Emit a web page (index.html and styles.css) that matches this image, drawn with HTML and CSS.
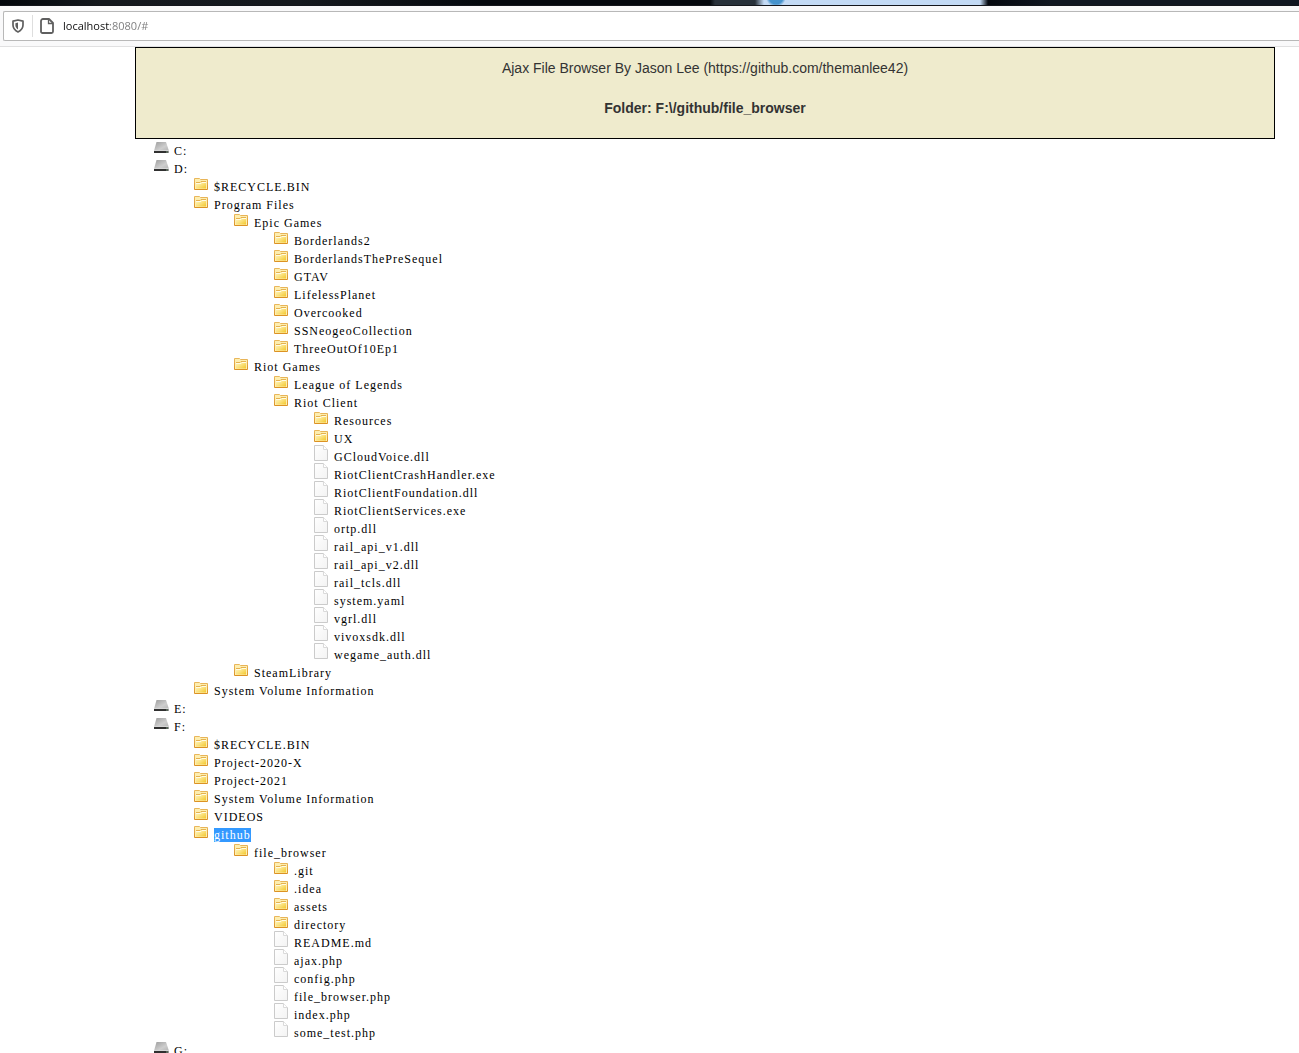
FILE: index.html
```html
<!DOCTYPE html>
<html lang="en">
<head>
<meta charset="utf-8">
<title>Ajax File Browser</title>
<link rel="stylesheet" href="styles.css">
</head>
<body>
<svg class="sprites" aria-hidden="true">
  <defs>
    <linearGradient id="gold" x1="0" y1="0" x2="1" y2="1"><stop offset="0" stop-color="#fff6c4"/><stop offset=".5" stop-color="#fbe382"/><stop offset="1" stop-color="#f2c72c"/></linearGradient>
    <linearGradient id="rim" x1="0" y1="0" x2="0" y2="1"><stop offset="0" stop-color="#e9b75c"/><stop offset="1" stop-color="#dc9224"/></linearGradient>
    <linearGradient id="steel" x1="0" y1="0" x2="1" y2="1"><stop offset="0" stop-color="#9c9c9c"/><stop offset=".6" stop-color="#cecece"/><stop offset="1" stop-color="#b4b4b4"/></linearGradient>
    <linearGradient id="paper" x1="0" y1="0" x2="1" y2="1"><stop offset="0" stop-color="#fff"/><stop offset="1" stop-color="#f3f3f3"/></linearGradient>
    <symbol id="folder" viewBox="0 0 16 16">
      <path d="M.5 14.5v-11h5l1 1h7v10z" fill="#fdeeb0" stroke="url(#rim)"/>
      <path d="M2 13.500v-6h4l1-1h5v7z" fill="url(#gold)"/>
      <path d="M2 7.500h4l1-1h5" stroke="#e6b24e" fill="none"/>
      <path d="M2 8.500h5l1-1h4" stroke="#fffbe6" fill="none"/>
    </symbol>
    <symbol id="file" viewBox="0 0 16 16">
      <path d="M.5.5h9l4 4v11H.5z" fill="url(#paper)" stroke="#cbcbcb"/>
      <path d="M9.500.5v4h4" fill="#fff" stroke="#dadada"/>
    </symbol>
    <symbol id="drive" viewBox="0 0 16 16">
      <path d="M2.500 3h9.500L15 12H0z" fill="url(#steel)"/>
      <path d="M0 12h14.500v2H0z" fill="#303030"/>
      <path d="M0 11.500h15" stroke="#d6d6d6"/>
      <path d="M12 13h2" stroke="#7f9a80"/>
    </symbol>
  </defs>
</svg>
<header class="browser">
  <div class="tabs"></div>
  <div class="toolbar">
    <div class="address">
      <svg class="shield" viewBox="0 0 12 14" aria-hidden="true"><path d="M6 1L11 2.200V6c0 3.500-2 5.500-5 7-3-1.500-5-3.500-5-7V2.200z" fill="none" stroke="#5f5f5f" stroke-width="1.700" stroke-linejoin="round"/><path d="M6 3.600v6.800C4 9.200 3.400 7.600 3.400 6V4.200z" fill="#5f5f5f"/></svg>
      <span class="divider"></span>
      <svg class="page-icon" viewBox="0 0 14 16" aria-hidden="true"><path d="M3 1h6l4 4v8.500a1.500 1.500 0 0 1-1.500 1.500h-9A1.500 1.500 0 0 1 1 13.500V3a2 2 0 0 1 2-2z" fill="none" stroke="#5f5f5f" stroke-width="1.800" stroke-linejoin="round"/><path d="M8.500 1v4.500H13" fill="none" stroke="#5f5f5f" stroke-width="1.300"/></svg>
      <input class="url" type="text" aria-label="Address" value="localhost:8080/#">
    </div>
  </div>
</header>
<main class="container">
  <section class="banner">
    <p>Ajax File Browser By Jason Lee (https://github.com/themanlee42)</p>
    <p class="path">Folder: F:\/github/file_browser</p>
  </section>
  <ul class="tree">
    <li><a href="#"><svg><use href="#drive"/></svg><span>C:</span></a></li>
    <li><a href="#"><svg><use href="#drive"/></svg><span>D:</span></a>
      <ul>
        <li><a href="#"><svg><use href="#folder"/></svg><span>$RECYCLE.BIN</span></a></li>
        <li><a href="#"><svg><use href="#folder"/></svg><span>Program Files</span></a>
          <ul>
            <li><a href="#"><svg><use href="#folder"/></svg><span>Epic Games</span></a>
              <ul>
                <li><a href="#"><svg><use href="#folder"/></svg><span>Borderlands2</span></a></li>
                <li><a href="#"><svg><use href="#folder"/></svg><span>BorderlandsThePreSequel</span></a></li>
                <li><a href="#"><svg><use href="#folder"/></svg><span>GTAV</span></a></li>
                <li><a href="#"><svg><use href="#folder"/></svg><span>LifelessPlanet</span></a></li>
                <li><a href="#"><svg><use href="#folder"/></svg><span>Overcooked</span></a></li>
                <li><a href="#"><svg><use href="#folder"/></svg><span>SSNeogeoCollection</span></a></li>
                <li><a href="#"><svg><use href="#folder"/></svg><span>ThreeOutOf10Ep1</span></a></li>
              </ul>
            </li>
            <li><a href="#"><svg><use href="#folder"/></svg><span>Riot Games</span></a>
              <ul>
                <li><a href="#"><svg><use href="#folder"/></svg><span>League of Legends</span></a></li>
                <li><a href="#"><svg><use href="#folder"/></svg><span>Riot Client</span></a>
                  <ul>
                    <li><a href="#"><svg><use href="#folder"/></svg><span>Resources</span></a></li>
                    <li><a href="#"><svg><use href="#folder"/></svg><span>UX</span></a></li>
                    <li><a href="#"><svg><use href="#file"/></svg><span>GCloudVoice.dll</span></a></li>
                    <li><a href="#"><svg><use href="#file"/></svg><span>RiotClientCrashHandler.exe</span></a></li>
                    <li><a href="#"><svg><use href="#file"/></svg><span>RiotClientFoundation.dll</span></a></li>
                    <li><a href="#"><svg><use href="#file"/></svg><span>RiotClientServices.exe</span></a></li>
                    <li><a href="#"><svg><use href="#file"/></svg><span>ortp.dll</span></a></li>
                    <li><a href="#"><svg><use href="#file"/></svg><span>rail_api_v1.dll</span></a></li>
                    <li><a href="#"><svg><use href="#file"/></svg><span>rail_api_v2.dll</span></a></li>
                    <li><a href="#"><svg><use href="#file"/></svg><span>rail_tcls.dll</span></a></li>
                    <li><a href="#"><svg><use href="#file"/></svg><span>system.yaml</span></a></li>
                    <li><a href="#"><svg><use href="#file"/></svg><span>vgrl.dll</span></a></li>
                    <li><a href="#"><svg><use href="#file"/></svg><span>vivoxsdk.dll</span></a></li>
                    <li><a href="#"><svg><use href="#file"/></svg><span>wegame_auth.dll</span></a></li>
                  </ul>
                </li>
              </ul>
            </li>
            <li><a href="#"><svg><use href="#folder"/></svg><span>SteamLibrary</span></a></li>
          </ul>
        </li>
        <li><a href="#"><svg><use href="#folder"/></svg><span>System Volume Information</span></a></li>
      </ul>
    </li>
    <li><a href="#"><svg><use href="#drive"/></svg><span>E:</span></a></li>
    <li><a href="#"><svg><use href="#drive"/></svg><span>F:</span></a>
      <ul>
        <li><a href="#"><svg><use href="#folder"/></svg><span>$RECYCLE.BIN</span></a></li>
        <li><a href="#"><svg><use href="#folder"/></svg><span>Project-2020-X</span></a></li>
        <li><a href="#"><svg><use href="#folder"/></svg><span>Project-2021</span></a></li>
        <li><a href="#"><svg><use href="#folder"/></svg><span>System Volume Information</span></a></li>
        <li><a href="#"><svg><use href="#folder"/></svg><span>VIDEOS</span></a></li>
        <li><a href="#" class="selected"><svg><use href="#folder"/></svg><span>github</span></a>
          <ul>
            <li><a href="#"><svg><use href="#folder"/></svg><span>file_browser</span></a>
              <ul>
                <li><a href="#"><svg><use href="#folder"/></svg><span>.git</span></a></li>
                <li><a href="#"><svg><use href="#folder"/></svg><span>.idea</span></a></li>
                <li><a href="#"><svg><use href="#folder"/></svg><span>assets</span></a></li>
                <li><a href="#"><svg><use href="#folder"/></svg><span>directory</span></a></li>
                <li><a href="#"><svg><use href="#file"/></svg><span>README.md</span></a></li>
                <li><a href="#"><svg><use href="#file"/></svg><span>ajax.php</span></a></li>
                <li><a href="#"><svg><use href="#file"/></svg><span>config.php</span></a></li>
                <li><a href="#"><svg><use href="#file"/></svg><span>file_browser.php</span></a></li>
                <li><a href="#"><svg><use href="#file"/></svg><span>index.php</span></a></li>
                <li><a href="#"><svg><use href="#file"/></svg><span>some_test.php</span></a></li>
              </ul>
            </li>
          </ul>
        </li>
      </ul>
    </li>
    <li><a href="#"><svg><use href="#drive"/></svg><span>G:</span></a></li>
  </ul>
</main>
</body>
</html>
```
FILE: styles.css
```css
* { box-sizing: border-box; }
body {
  margin: 0;
  height: 100vh;
  overflow: hidden;
  display: flex;
  flex-direction: column;
  background: #fff;
  color: #333;
  font: 14px/20px "Liberation Sans", Arial, sans-serif;
}
.sprites { position: absolute; width: 0; height: 0; }
.browser { flex: none; }
.tabs {
  height: 6px;
  background:
    radial-gradient(circle at 776px -3px, #4693cd 0 7px, transparent 10px),
    linear-gradient(to right, #02060b 0, #14181d 100px, #15191e 300px, #03070c 480px, #03070c 710px, #27303a 715px, #27303a 755px, #c3daf5 764px, #c3daf5 980px, #03070e 988px, #101620 1050px, #101620 100%);
  border-bottom: 1px solid #14161c;
}
.toolbar {
  padding: 5px 0 5px 3px;
  background: #f9f9fa;
  border-bottom: 1px solid #e0e0e1;
}
.address {
  display: flex;
  align-items: center;
  height: 30px;
  padding-left: 8px;
  background: #fff;
  border: 1px solid #b8b8b8;
  border-right: 0;
  border-radius: 2px 0 0 2px;
}
.shield { width: 12px; height: 14px; }
.divider { width: 1px; height: 22px; margin: 0 7px 0 8px; background: #dedede; }
.page-icon { width: 14px; height: 16px; }
.url {
  flex: 1;
  min-width: 0;
  height: 24px;
  margin-left: 9px;
  padding: 0;
  border: 0;
  outline: 0;
  font: 11px/24px "Open Sans", "Noto Sans", sans-serif;
  color: transparent;
  background: linear-gradient(to right, #0c0c0d 47px, #7a7a7b 47px);
  background-clip: text;
  -webkit-background-clip: text;
}
.container { flex: 1; min-height: 0; margin: 0 24px 0 135px; }
.banner {
  padding: 10px 10px 20px;
  text-align: center;
  background: #efebcd;
  border: 1px solid #000;
}
.banner p { margin: 0; }
.banner .path { margin-top: 20px; font-weight: bold; }
.tree {
  padding: 2px 0 0 19px;
  font: 12px/18px "Liberation Serif", "Times New Roman", serif;
  letter-spacing: 1px;
}
.tree, .tree ul { margin: 0; list-style: none; }
.tree ul { padding: 0 0 0 40px; }
.tree a {
  display: flex;
  gap: 4px;
  height: 18px;
  color: #000;
  text-decoration: none;
}
.tree svg { flex: none; width: 16px; height: 16px; margin-top: -2px; }
.tree span { line-height: 14px; padding-top: 3px; }
.tree .selected span {
  height: 14px;
  margin-top: 3px;
  padding-top: 0;
  color: #fff;
  background: #39f;
}
```
